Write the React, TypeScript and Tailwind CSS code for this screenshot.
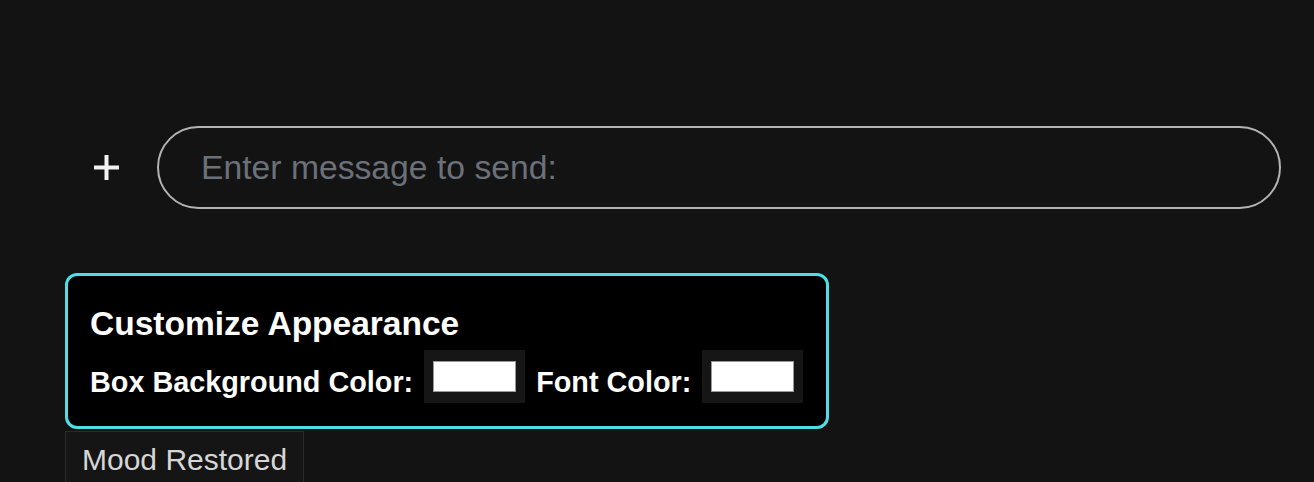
import React from "react";

const ColorSwatch = () => (
  <div className="flex h-[53px] w-[101px] items-center justify-center bg-[#161616]">
    <div className="h-[31px] w-[83px] border border-[#9a9a9a] bg-white" />
  </div>
);

export default function App() {
  return (
    <div className="min-h-screen bg-[#131313] pt-[126px] font-['Liberation_Sans',Arial,sans-serif]">
      {/* message bar */}
      <div className="flex items-center pl-[93px] pr-[33px]">
        <svg width="27" height="27" viewBox="0 0 27 27" className="shrink-0">
          <path d="M13.5 1v25M1 13.5h25" stroke="#f2f2f2" strokeWidth="4" />
        </svg>
        <input
          type="text"
          placeholder="Enter message to send:"
          className="ml-[37px] h-[83px] flex-1 rounded-full border-2 border-[#b3b3b3] bg-transparent px-[42px] text-[33.7px] text-white outline-none placeholder:text-[#6b7079]"
        />
      </div>

      {/* appearance card */}
      <div className="ml-[65px] mt-[64px] w-[764px] rounded-[12px] border-[3px] border-[#52dde5] bg-black px-[22px] pb-[23px] pt-[29px] text-white">
        <h3 className="text-[33.5px] font-bold leading-[38px]">Customize Appearance</h3>
        <div className="mt-[7px] flex items-start gap-[11px]">
          <span className="mt-[16px] text-[28.8px] font-bold leading-[32px]">Box Background Color:</span>
          <ColorSwatch />
          <span className="mt-[16px] text-[28.8px] font-bold leading-[32px]">Font Color:</span>
          <ColorSwatch />
        </div>
      </div>

      <div className="ml-[65px] mt-[2px] inline-block border border-[#2a2a2a] bg-[#151515] pl-[16px] pr-[16px] pt-[11px] pb-[10px] text-[30px] leading-[34px] text-[#d6d6d6]">
        Mood Restored
      </div>
    </div>
  );
}
